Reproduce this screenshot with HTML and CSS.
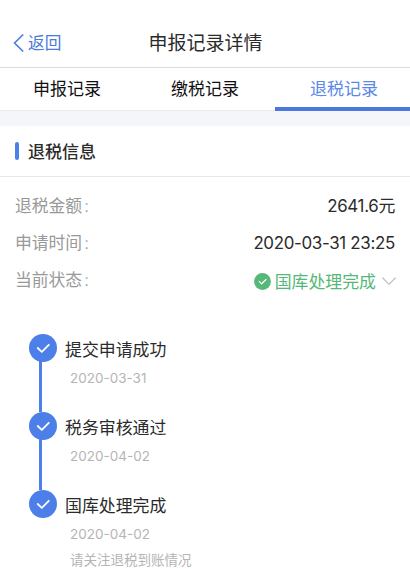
FILE: index.html
```
<!DOCTYPE html>
<html lang="zh-CN">
<head>
    <meta charset="UTF-8">
    <meta name="viewport" content="width=device-width, initial-scale=1.0">
    <title>申报记录详情</title>
    <link rel="stylesheet" href="styles.css">
</head>
<body>
    <header class="navbar">
        <a class="back" href="#">
            <svg class="back-icon" viewBox="0 0 11 18"><path d="M9.7 1 L1.5 9 L9.7 17"/></svg>
            <span>返回</span>
        </a>
        <h1>申报记录详情</h1>
    </header>

    <nav class="tabs">
        <a class="tab" href="#">申报记录</a>
        <a class="tab" href="#">缴税记录</a>
        <a class="tab tab-active" href="#">退税记录</a>
    </nav>

    <main>
        <div class="section-title">
            <h2>退税信息</h2>
        </div>

        <div class="info">
            <div class="info-row">
                <span class="label">退税金额<i>:</i></span>
                <span class="value">2641.6元</span>
            </div>
            <div class="info-row">
                <span class="label">申请时间<i>:</i></span>
                <span class="value">2020-03-31 23:25</span>
            </div>
            <div class="info-row">
                <span class="label">当前状态<i>:</i></span>
                <span class="status">
                    <svg class="status-icon" viewBox="0 0 17 17"><circle cx="8.5" cy="8.5" r="8.4"/><path d="M5.2 8.4 L7.6 10.8 L12 6.5"/></svg>
                    <span>国库处理完成</span>
                    <svg class="arrow-down" viewBox="0 0 14 9"><path d="M0.8 1 L7 7.4 L13.2 1"/></svg>
                </span>
            </div>
        </div>

        <ul class="timeline">
            <li class="step">
                <svg class="step-icon" viewBox="0 0 28 28"><circle cx="14" cy="14" r="14"/><path d="M8.7 14 L12.8 17.9 L19.8 10.8"/></svg>
                <div class="step-body">
                    <h3>提交申请成功</h3>
                    <p>2020-03-31</p>
                </div>
            </li>
            <li class="step">
                <svg class="step-icon" viewBox="0 0 28 28"><circle cx="14" cy="14" r="14"/><path d="M8.7 14 L12.8 17.9 L19.8 10.8"/></svg>
                <div class="step-body">
                    <h3>税务审核通过</h3>
                    <p>2020-04-02</p>
                </div>
            </li>
            <li class="step">
                <svg class="step-icon" viewBox="0 0 28 28"><circle cx="14" cy="14" r="14"/><path d="M8.7 14 L12.8 17.9 L19.8 10.8"/></svg>
                <div class="step-body">
                    <h3>国库处理完成</h3>
                    <p>2020-04-02</p>
                    <p class="note">请关注退税到账情况</p>
                </div>
            </li>
        </ul>
    </main>
</body>
</html>
```
FILE: styles.css
```
* {
    box-sizing: border-box;
}

body {
    margin: 0;
    height: 569px;
    overflow: hidden;
    background: #fff;
    color: #2b2b2b;
    font-family: Inter, "Noto Sans CJK SC", sans-serif;
    font-size: 17px;
}

h1, h2, h3, p, ul {
    margin: 0;
    padding: 0;
    font-weight: 400;
}

a {
    color: inherit;
    text-decoration: none;
}

svg {
    display: block;
    flex: none;
    fill: none;
    stroke-linecap: round;
    stroke-linejoin: round;
}

.navbar {
    display: grid;
    grid-template-columns: 1fr auto 1fr;
    align-items: center;
    height: 68px;
    padding: 18px 12px 0 13px;
    border-bottom: 1px solid #dcdcdc;
}

.navbar h1 {
    padding-top: 2px;
    font-size: 19px;
    line-height: 28px;
}

.back {
    display: flex;
    align-items: center;
    gap: 4px;
    color: #4a7bdb;
    font-size: 16.7px;
    line-height: 28px;
}

.back-icon {
    width: 11px;
    height: 18px;
    stroke: #4a7be6;
    stroke-width: 1.7;
}

.tabs {
    display: grid;
    grid-template-columns: 134px 141px 135px;
    grid-template-rows: 43px;
    height: 58px;
    border-bottom: 15px solid #f4f6f9;
}

.tab {
    border-bottom: 1px solid #e9ebee;
    color: #111;
    line-height: 42px;
    text-align: center;
}

.tab:nth-child(2) {
    padding-left: 1px;
}

.tab-active {
    border-bottom: 4px solid #4a78dc;
    color: #5b87e8;
    padding-left: 3px;
}

.section-title {
    display: flex;
    align-items: center;
    gap: 9px;
    height: 51px;
    padding-left: 15px;
    border-bottom: 1px solid #e8e8e8;
}

.section-title::before {
    content: "";
    width: 4px;
    height: 18px;
    border-radius: 2px;
    background: #4c82e8;
}

.section-title h2 {
    padding-top: 2px;
    font-size: 17px;
    font-weight: 500;
    line-height: 26px;
}

.info {
    padding: 11px 15px 0;
}

.info-row {
    display: flex;
    justify-content: space-between;
    height: 37px;
    line-height: 37px;
}

.label {
    color: #999;
    font-size: 16.8px;
}

.label i {
    margin-left: 2px;
    font-style: normal;
    font-weight: 300;
}

.value {
    font-size: 16.9px;
    letter-spacing: -0.31px;
}

.status {
    display: flex;
    align-items: center;
    gap: 4px;
    height: 39px;
    margin-right: -1px;
    color: #55b878;
    font-size: 16.9px;
}

.status span {
    padding-top: 1px;
}

.status-icon {
    width: 17px;
    height: 17px;
    stroke: #fff;
    stroke-width: 1.2;
}

.status-icon circle {
    fill: #55b878;
    stroke: none;
}

.arrow-down {
    width: 14px;
    height: 9px;
    margin-left: 2px;
    stroke: #c0c0c0;
    stroke-width: 1.2;
}

.timeline {
    padding: 35px 0 0 29px;
    list-style: none;
}

.step {
    display: flex;
    gap: 8px;
    height: 78px;
    background: linear-gradient(#4c7fe8, #4c7fe8) 10px 14px / 3px 78px no-repeat;
}

.step:last-child {
    background: none;
}

.step-icon {
    width: 28px;
    height: 28px;
    stroke: #fff;
    stroke-width: 1.8;
}

.step-icon circle {
    fill: #4c7fe8;
    stroke: none;
}

.step-body h3 {
    padding-top: 1px;
    font-size: 16.9px;
    line-height: 30px;
}

.step-body p {
    padding-left: 5px;
    color: #b5b5b5;
    font-size: 13.5px;
    line-height: 26px;
}
```
